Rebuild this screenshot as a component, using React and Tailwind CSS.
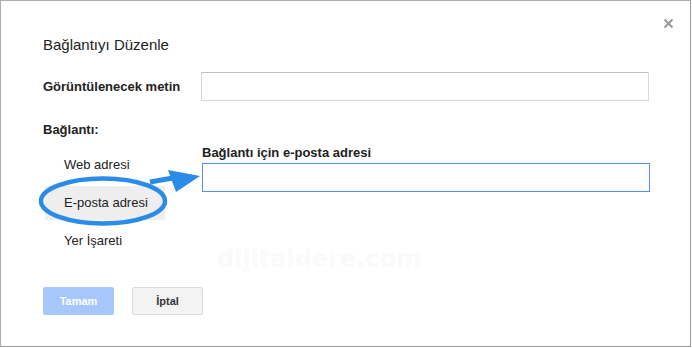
export default function App() {
  const font = { fontFamily: '"Liberation Sans", Arial, sans-serif' };
  return (
    <div className="w-[692px] h-[348px] bg-white" style={font}>
      <div className="relative w-[691px] h-[347px] border border-[#acacac] border-r-[#9a9a9a] border-b-[#9a9a9a] bg-white text-[#222]">
        {/* close */}
        <svg className="absolute left-[662px] top-[17px]" width="11" height="11" viewBox="0 0 11 11">
          <path d="M1.5 1.5 L9.5 9.5 M9.5 1.5 L1.5 9.5" stroke="#999" strokeWidth="2" />
        </svg>

        <div className="pl-[42px] pt-[34px]">
          <div className="text-[15px] leading-[20px] text-[#222]">Bağlantıyı Düzenle</div>

          <div className="mt-[17px] flex items-center">
            <div className="w-[158px] text-[13px] font-bold leading-[16px]">Görüntülenecek metin</div>
            <div className="w-[448px] h-[29px] border border-[#d9d9d9] border-t-[#c0c0c0] bg-white" />
          </div>

          <div className="mt-[21px] text-[13px] font-bold leading-[16px]">Bağlantı:</div>

          <div className="flex">
            <div className="w-[159px] pt-[10px] pl-[2px] flex flex-col gap-[4px]">
              <div className="w-[120px] h-[34px] pl-[19px] flex items-center text-[13px]">Web adresi</div>
              <div className="w-[120px] h-[34px] pl-[19px] flex items-center text-[13px] bg-[#eeeeee]">E-posta adresi</div>
              <div className="w-[120px] h-[34px] pl-[19px] flex items-center text-[13px]">Yer İşareti</div>
            </div>
            <div className="pt-[7px]">
              <div className="text-[13px] font-bold leading-[16px]">Bağlantı için e-posta adresi</div>
              <div className="mt-[2px] w-[448px] h-[29px] border border-[#4d90fe] bg-white" />
            </div>
          </div>

          <div className="mt-[29px] flex gap-[18px]">
            <div className="w-[71px] h-[28px] rounded-[2px] bg-[#a6c7fb] flex items-center justify-center text-[11px] font-bold text-white">Tamam</div>
            <div className="w-[71px] h-[28px] rounded-[2px] bg-[#f3f3f3] border border-[#dcdcdc] flex items-center justify-center text-[11px] font-bold text-[#333]">İptal</div>
          </div>
        </div>

        {/* watermark */}
        <div className="absolute left-[216px] top-[240px] text-[24px] font-bold text-[#fafafa]" style={{ fontFamily: '"DejaVu Sans", sans-serif' }}>dijitaldere.com</div>

        {/* annotation */}
        <svg className="absolute left-0 top-0 pointer-events-none" width="691" height="347" viewBox="0 0 691 347">
          <ellipse cx="102" cy="200" rx="62" ry="22.5" fill="none" stroke="#2b8be8" strokeWidth="4.5" />
          <path d="M149 181 L172 177" stroke="#2b8be8" strokeWidth="5" />
          <path d="M167 169 L199 175 L175 191 Z" fill="#2b8be8" />
        </svg>
      </div>
    </div>
  );
}
